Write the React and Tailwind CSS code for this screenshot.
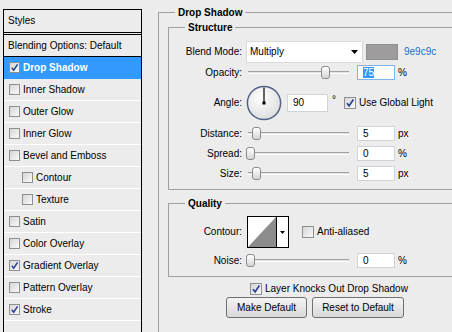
import React from "react";

function Check({ checked, size = "s" }) {
  const sz = size === "s" ? "w-[11px] h-[11px]" : "w-[12px] h-[12px]";
  return (
    <span
      className={`${sz} shrink-0 border border-[#8e8f8f] bg-linear-to-br from-[#d6d6d6] to-[#fafafa] flex items-center justify-center`}
    >
      {checked && (
        <svg viewBox="0 0 10 10" className="w-full h-full">
          <path d="M2 5.3 L4.1 7.9 L8.4 1.6" fill="none" stroke="#2b3f98" strokeWidth="1.7" />
        </svg>
      )}
    </span>
  );
}

function GroupHeader({ title }) {
  return (
    <div className="flex h-[13px]">
      <div className="w-[17px] h-[7px] mt-[6px] border-l border-t border-[#a0a0a0] shrink-0" />
      <div className="px-[3px] font-bold leading-[13px] whitespace-nowrap">{title}</div>
      <div className="flex-1 h-[7px] mt-[6px] border-t border-r border-[#a0a0a0]" />
    </div>
  );
}

function Label({ children }) {
  return <div className="w-[73px] mr-[4px] text-right shrink-0 whitespace-nowrap">{children}</div>;
}

function Slider({ pos }) {
  return (
    <div className="relative w-[103px] h-[15px] shrink-0 flex items-center">
      <div className="ml-[2px] flex-1 h-[3px] border-t border-[#a2a2a2] border-b border-b-white bg-[#e2e2e2]" />
      <div
        className="absolute top-[1px] w-[9px] h-[13px] rounded-[3px] border border-[#8a8a8a] bg-linear-to-b from-white to-[#d6d6d6]"
        style={{ left: pos }}
      />
    </div>
  );
}

function Field({ children, focus }) {
  return (
    <div
      className={`ml-[8px] w-[38px] h-[15px] bg-white border flex items-center pl-[5px] shrink-0 ${
        focus ? "border-[#7eb4ea]" : "border-[#d0d3d8]"
      }`}
    >
      {children}
    </div>
  );
}

const styles = [
  { label: "Drop Shadow", checked: true, sel: true },
  { label: "Inner Shadow" },
  { label: "Outer Glow" },
  { label: "Inner Glow" },
  { label: "Bevel and Emboss" },
  { label: "Contour", indent: true },
  { label: "Texture", indent: true },
  { label: "Satin" },
  { label: "Color Overlay" },
  { label: "Gradient Overlay", checked: true },
  { label: "Pattern Overlay" },
  { label: "Stroke", checked: true },
];

export default function App() {
  return (
    <div className="w-[452px] h-[332px] overflow-hidden bg-[#ececec] flex font-['Liberation_Sans',Arial,sans-serif] text-[10px] leading-none text-black">
      {/* Left styles list */}
      <div className="ml-[3px] mt-[9px] w-[139px] h-[340px] shrink-0 border-x border-t border-black">
        <div className="h-[25px] border-b-[3px] border-double border-black flex items-center pl-[4px]">
          Styles
        </div>
        <div className="h-[22px] border-b border-black flex items-center pl-[4px] whitespace-nowrap">
          Blending Options: Default
        </div>
        {styles.map((s) => (
          <div
            key={s.label}
            className={`h-[22px] border-b flex items-center gap-[3px] whitespace-nowrap ${
              s.sel ? "bg-[#3399ff] border-[#3399ff] text-white font-bold" : "border-white"
            } ${s.indent ? "pl-[18px]" : "pl-[5px]"}`}
          >
            <Check checked={s.checked} />
            <span>{s.label}</span>
          </div>
        ))}
      </div>

      {/* Right settings */}
      <div className="ml-[16px] mt-[6px] w-[320px] shrink-0 flex flex-col">
        <GroupHeader title="Drop Shadow" />
        <div className="border-x border-[#a0a0a0] px-[9px] h-[400px] flex flex-col">
          {/* Structure */}
          <div className="mt-[2px]">
            <GroupHeader title="Structure" />
            <div className="border-x border-b border-[#a0a0a0] pt-[7px] pb-[8px] flex flex-col">
              <div className="flex items-center h-[22px]">
                <Label>Blend Mode:</Label>
                <div className="w-[117px] h-[22px] bg-white border border-[#dadada] flex items-center pl-[3px] pr-[4px] shrink-0">
                  <span className="flex-1">Multiply</span>
                  <svg width="7" height="4" viewBox="0 0 7 4">
                    <path d="M0 0 H7 L3.5 4 Z" fill="#000" />
                  </svg>
                </div>
                <div className="ml-[3px] w-[32px] h-[16px] bg-[#9e9c9c] border border-[#8f8d8d] shrink-0" />
                <span className="ml-[6px] text-[#1e6cc2]">9e9c9c</span>
              </div>

              <div className="flex items-center h-[15px] mt-[2px]">
                <Label>Opacity:</Label>
                <Slider pos={75} />
                <Field focus>
                  <span className="bg-[#3399ff] text-white leading-[11px]">75</span>
                </Field>
                <span className="ml-[3px]">%</span>
              </div>

              <div className="flex items-center h-[35px] mt-[5px]">
                <Label>Angle:</Label>
                <svg width="36" height="36" viewBox="0 0 36 36" className="shrink-0">
                  <defs>
                    <radialGradient id="dialg" cx="0.4" cy="0.35" r="0.7">
                      <stop offset="0" stopColor="#ffffff" />
                      <stop offset="1" stopColor="#dcdcdc" />
                    </radialGradient>
                  </defs>
                  <circle cx="18" cy="18" r="16.6" fill="url(#dialg)" stroke="#52628a" strokeWidth="1.5" />
                  <line x1="18" y1="18" x2="18" y2="2.5" stroke="#000" strokeWidth="1.2" />
                  <rect x="16.5" y="16.5" width="3" height="3" fill="#000" />
                </svg>
                <div className="ml-[5px] w-[41px] h-[18px] bg-white border border-[#d0d3d8] flex items-center pl-[5px] shrink-0">
                  90
                </div>
                <span className="ml-[4px] self-start mt-[10px]">°</span>
                <div className="ml-[8px] flex items-center gap-[3px] whitespace-nowrap">
                  <Check checked size="m" />
                  <span>Use Global Light</span>
                </div>
              </div>

              <div className="flex items-center h-[15px] mt-[6px]">
                <Label>Distance:</Label>
                <Slider pos={6} />
                <Field>5</Field>
                <span className="ml-[3px]">px</span>
              </div>
              <div className="flex items-center h-[15px] mt-[5px]">
                <Label>Spread:</Label>
                <Slider pos={0} />
                <Field>0</Field>
                <span className="ml-[3px]">%</span>
              </div>
              <div className="flex items-center h-[15px] mt-[5px]">
                <Label>Size:</Label>
                <Slider pos={6} />
                <Field>5</Field>
                <span className="ml-[3px]">px</span>
              </div>
            </div>
          </div>

          {/* Quality */}
          <div className="mt-[7px]">
            <GroupHeader title="Quality" />
            <div className="border-x border-b border-[#a0a0a0] pt-[6px] pb-[8px] flex flex-col">
              <div className="flex items-center h-[32px]">
                <div className="w-[73px] mr-[5px] text-right shrink-0">Contour:</div>
                <div className="w-[42px] h-[32px] border border-black bg-white flex shrink-0">
                  <svg width="28" height="30" viewBox="0 0 28 30" className="shrink-0">
                    <polygon points="0,30 28,0 28,30" fill="#8c8c8c" />
                  </svg>
                  <div className="flex-1 border-l border-black flex items-center justify-center">
                    <svg width="5" height="3" viewBox="0 0 5 3">
                      <path d="M0 0 H5 L2.5 3 Z" fill="#000" />
                    </svg>
                  </div>
                </div>
                <div className="ml-[13px] flex items-center gap-[3px] whitespace-nowrap">
                  <Check size="m" />
                  <span>Anti-aliased</span>
                </div>
              </div>
              <div className="flex items-center h-[15px] mt-[5px]">
                <Label>Noise:</Label>
                <Slider pos={0} />
                <Field>0</Field>
                <span className="ml-[3px]">%</span>
              </div>
            </div>
          </div>

          <div className="mt-[5px] h-[13px] ml-[82px] flex items-center gap-[3px] whitespace-nowrap">
            <Check checked size="m" />
            <span>Layer Knocks Out Drop Shadow</span>
          </div>

          <div className="mt-[2px] ml-[58px] flex">
            <button className="w-[81px] h-[21px] rounded-[3px] border border-[#707070] bg-linear-to-b from-[#f4f4f4] to-[#d8d8d8] text-[10px]">
              Make Default
            </button>
            <button className="ml-[5px] w-[92px] h-[21px] rounded-[3px] border border-[#707070] bg-linear-to-b from-[#f4f4f4] to-[#d8d8d8] text-[10px]">
              Reset to Default
            </button>
          </div>
        </div>
      </div>
    </div>
  );
}
